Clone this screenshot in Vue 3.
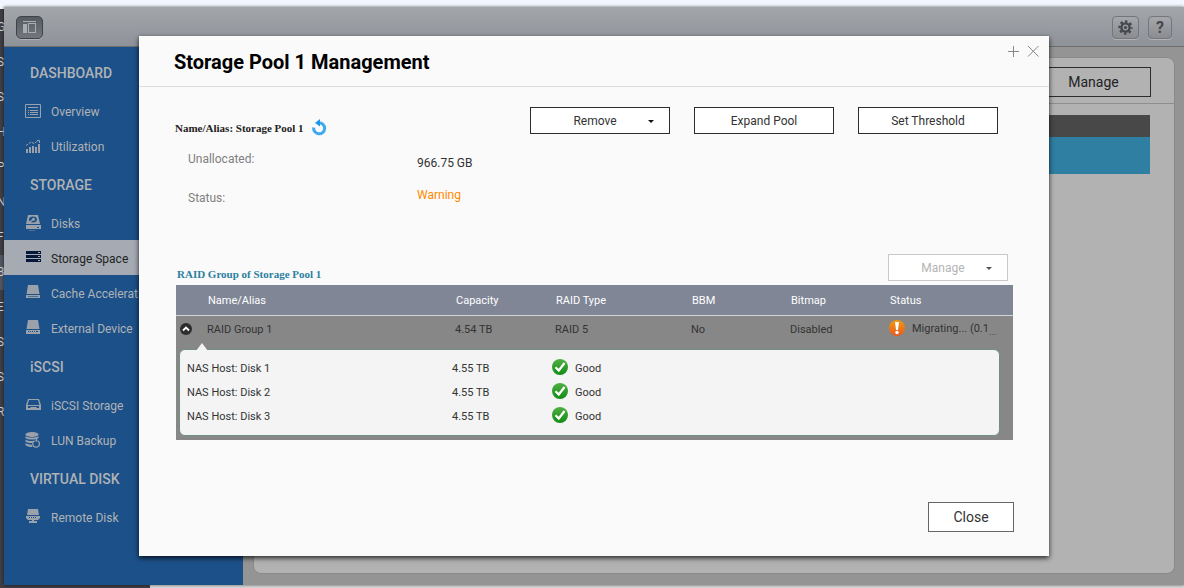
<script setup>
const desktopMenu = ['G', 'Si', 'Sc', 'H', 'Po', 'N', 'Fi', 'B', 'Ex', 'Sy', 'Sy', 'R']

const sections = [
  { title: 'DASHBOARD', items: [{ label: 'Overview', icon: 'overview' }, { label: 'Utilization', icon: 'chart' }] },
  {
    title: 'STORAGE',
    items: [
      { label: 'Disks', icon: 'disk' },
      { label: 'Storage Space', icon: 'rack', active: true },
      { label: 'Cache Acceleration', icon: 'cache' },
      { label: 'External Device', icon: 'external' },
    ],
  },
  { title: 'iSCSI', items: [{ label: 'iSCSI Storage', icon: 'iscsi' }, { label: 'LUN Backup', icon: 'backup' }] },
  { title: 'VIRTUAL DISK', items: [{ label: 'Remote Disk', icon: 'remote' }] },
]

const headings = ['Name/Alias', 'Capacity', 'RAID Type', 'BBM', 'Bitmap', 'Status']

const disks = [
  { name: 'NAS Host: Disk 1', capacity: '4.55 TB', status: 'Good' },
  { name: 'NAS Host: Disk 2', capacity: '4.55 TB', status: 'Good' },
  { name: 'NAS Host: Disk 3', capacity: '4.55 TB', status: 'Good' },
]
</script>

<template>
  <div class="desktop">
    <ul class="desktop-menu">
      <li v-for="(name, i) in desktopMenu" :key="i" :class="{ current: name === 'B' }">{{ name }}</li>
    </ul>

    <div class="window">
      <header class="toolbar">
        <button class="tool pressed" type="button" aria-label="Toggle sidebar">
          <svg width="14" height="14" viewBox="0 0 14 14">
            <path d="M0 1h13v1H0zM0 4h4v9H0zM5 4h1v9H5zM5 12h8v1H5zM12 4h1v8h-1zM5 3h8v1H5z" fill="#a9adb2" />
          </svg>
        </button>
        <div class="tool-group">
          <button class="tool" type="button" aria-label="Settings">
            <svg width="15" height="15" viewBox="0 0 15 15">
              <g fill="none" stroke="#45484c">
                <circle cx="7.5" cy="7.5" r="4.1" stroke-width="2.4" />
                <circle cx="7.5" cy="7.5" r="6" stroke-width="2.4" stroke-dasharray="2.4 2.312" stroke-dashoffset="1.2" />
              </g>
              <circle cx="7.5" cy="7.5" r="1.6" fill="#45484c" />
            </svg>
          </button>
          <button class="tool help" type="button" aria-label="Help">?</button>
        </div>
      </header>

      <div class="window-body">
        <nav class="sidebar">
          <section v-for="s in sections" :key="s.title">
            <h2>{{ s.title }}</h2>
            <a v-for="item in s.items" :key="item.label" href="#" :class="{ active: item.active }">
              <svg class="nav-icon" width="16" height="16" viewBox="0 0 16 16">
                <template v-if="item.icon === 'overview'">
                  <path d="M.5 1.5h15v13H.5z" fill="none" stroke="currentColor" />
                  <path d="M3 4.5h10M3 7.5h1M5 7.5h8M3 9.5h1M5 9.5h8M3 11.5h1M5 11.5h8" stroke="currentColor" />
                </template>
                <template v-else-if="item.icon === 'chart'">
                  <path d="M1 11h2v4H1zM4 9h2v6H4zM7 8h2v7H7zM10 9h2v6h-2zM13 6h2v9h-2z" fill="currentColor" />
                  <path d="M1 7.5L6 4l3 1.500L14 2" fill="none" stroke="currentColor" stroke-dasharray="2.500 1" />
                  <path d="M12 2.500h2.500V5" fill="none" stroke="currentColor" />
                </template>
                <template v-else-if="item.icon === 'disk'">
                  <path fill-rule="evenodd" d="M3 0h10l2 9H1zM8 1.500c-2.500 0-4 1.200-4 3s1.500 3 4 3 4-1.200 4-3-1.500-3-4-3z" fill="currentColor" />
                  <path d="M5 7l3-2.500" stroke="currentColor" stroke-width="1.500" /><circle cx="8.500" cy="4.200" r="1.500" fill="currentColor" />
                  <path fill-rule="evenodd" d="M1 10h15v4H1zm11 2h2v1h-2z" fill="currentColor" />
                  <path d="M4 15.500h6" stroke="currentColor" opacity=".4" />
                </template>
                <template v-else-if="item.icon === 'rack'">
                  <path fill-rule="evenodd" d="M1 1h15v3H1zM13 2h2v1h-2zM1 5h15v3H1zM13 6h2v1h-2zM1 9h15v3H1zM13 10h2v1h-2z" fill="currentColor" />
                </template>
                <template v-else-if="item.icon === 'cache'">
                  <path d="M3 0h10l1.500 9h-13zM1 10h14v3H1z" fill="currentColor" /><path d="M3 11.500h10" stroke="#1c5088" opacity=".6" />
                </template>
                <template v-else-if="item.icon === 'external'">
                  <path fill-rule="evenodd" d="M3 0h10l1.500 9h-13zM1 10h14v4H1zm2 1v1h1v-1zm2 0v1h1v-1zm2 0v1h1v-1zm2 0v1h1v-1zm2 0v1h2v-1z" fill="currentColor" />
                </template>
                <template v-else-if="item.icon === 'iscsi'">
                  <path fill-rule="evenodd" d="M3 2h11l2 6v5H1V8zm1 1L2.500 8h12L13 3zM3 9v2h2l1-1h5l1 1h2V9z" fill="currentColor" />
                </template>
                <template v-else-if="item.icon === 'backup'">
                  <g fill="currentColor">
                    <ellipse cx="7" cy="2.500" rx="6.500" ry="2.500" />
                    <path d="M.5 4c2 2 11 2 13 0v2c-2 2-11 2-13 0zM.5 7.500c2 1.500 5 1.800 8 1.500l-1.500 2c-3 0-5-.5-6.500-1.500zM.5 11c1.500 1 4 1.500 6 1.500l1 2.500c-3 0-6-.5-7-2z" />
                  </g>
                  <path d="M9.500 8.800a3.400 3.400 0 1 0 3.500.2" fill="none" stroke="currentColor" stroke-width="1.300" />
                  <path d="M12 6l.5 4L10 9z" fill="currentColor" />
                </template>
                <template v-else>
                  <path fill-rule="evenodd" d="M3 0h10l1 6H2zM1 7h14v2l-2 2H3L1 9zM4 8v1h1V8zm2 0v1h1V8zm2 0v1h1V8zm2 0v1h1V8z" fill="currentColor" />
                  <path d="M7 11h2v1h3v2H4v-2h3z" fill="currentColor" />
                </template>
              </svg>
              <span>{{ item.label }}</span>
            </a>
          </section>
        </nav>

        <main class="content">
          <div class="panel">
            <div class="panel-head"><button class="btn manage" type="button">Manage</button></div>
            <div class="pool-head"></div>
            <div class="pool-row"></div>
          </div>
        </main>
      </div>
    </div>

    <div class="dialog" role="dialog" aria-labelledby="dialog-title">
      <header class="dialog-head">
        <h1 id="dialog-title">Storage Pool 1 Management</h1>
        <div class="dialog-tools">
          <button type="button" aria-label="Maximize">
            <svg width="12" height="12" viewBox="0 0 12 12"><path d="M6.500 1v11M1 6.500h11" stroke="#888" fill="none" /></svg>
          </button>
          <button type="button" aria-label="Close dialog">
            <svg width="12" height="12" viewBox="0 0 12 12"><path d="M1 1l10.500 10.500M11.500 1L1 11.500" stroke="#888" fill="none" /></svg>
          </button>
        </div>
      </header>

      <div class="dialog-body">
        <div class="summary">
          <h3>Name/Alias: Storage Pool 1</h3>
          <button class="refresh" type="button" aria-label="Refresh">
            <svg width="16" height="17" viewBox="0 0 16 17">
              <path d="M1.700 8.500a5.500 5.500 0 1 0 5.800-4.700" fill="none" stroke="#3ea9ee" stroke-width="3" />
              <path d="M8 0v7.500L3 4z" fill="#1c96ea" />
            </svg>
          </button>
          <div class="actions">
            <button class="btn drop" type="button">Remove<i class="caret"></i></button>
            <button class="btn" type="button">Expand Pool</button>
            <button class="btn" type="button">Set Threshold</button>
          </div>
        </div>

        <dl class="facts">
          <dt>Unallocated:</dt>
          <dd>966.75 GB</dd>
          <dt class="low">Status:</dt>
          <dd class="warning">Warning</dd>
        </dl>

        <div class="group-bar">
          <h3>RAID Group of Storage Pool 1</h3>
          <button class="btn drop" type="button" disabled>Manage<i class="caret"></i></button>
        </div>

        <table class="raid">
          <colgroup>
            <col class="c-toggle" /><col class="c-name" /><col class="c-cap" /><col class="c-type" />
            <col class="c-small" /><col class="c-small" /><col />
          </colgroup>
          <thead>
            <tr>
              <th></th>
              <th v-for="h in headings" :key="h" scope="col">{{ h }}</th>
            </tr>
          </thead>
          <tbody>
            <tr class="group">
              <td class="toggle">
                <button type="button" aria-label="Collapse RAID Group 1">
                  <svg width="12" height="12" viewBox="0 0 12 12">
                    <circle cx="6" cy="6" r="6" fill="#2d2d2d" /><path d="M3 7.500l3-3 3 3" fill="none" stroke="#fff" stroke-width="1.800" />
                  </svg>
                </button>
              </td>
              <td>RAID Group 1</td>
              <td>4.54 TB</td>
              <td>RAID 5</td>
              <td>No</td>
              <td>Disabled</td>
              <td>
                <div class="state">
                  <svg width="16" height="16" viewBox="0 0 16 16">
                    <defs><linearGradient id="warn" x2="0" y2="1"><stop stop-color="#f29a0c" /><stop offset="1" stop-color="#e65a22" /></linearGradient></defs>
                    <circle cx="8" cy="8" r="8" fill="url(#warn)" />
                    <path d="M6 2h4l-1 8H7z" fill="#fff" /><circle cx="8" cy="12.500" r="1.700" fill="#fff" />
                  </svg>
                  <span>Migrating... (0.1<small>...</small></span>
                </div>
              </td>
            </tr>
            <tr>
              <td colspan="7" class="nested">
                <div class="disks">
                  <svg class="pointer" width="12" height="8" viewBox="0 0 12 8"><path d="M0 8l6-8 6 8z" fill="#f4f4f4" /></svg>
                  <table>
                    <colgroup><col class="d-name" /><col class="d-cap" /><col /></colgroup>
                    <tbody>
                      <tr v-for="d in disks" :key="d.name">
                        <td>{{ d.name }}</td>
                        <td>{{ d.capacity }}</td>
                        <td>
                          <div class="state">
                            <svg width="16" height="16" viewBox="0 0 16 16">
                              <defs><linearGradient id="ok" x2="0" y2="1"><stop stop-color="#52b043" /><stop offset="1" stop-color="#0f8c14" /></linearGradient></defs>
                              <circle cx="8" cy="8" r="8" fill="url(#ok)" />
                              <path d="M3.500 8.200l3.300 3.300 5.700-7.500" fill="none" stroke="#fff" stroke-width="2.200" />
                            </svg>
                            <span>{{ d.status }}</span>
                          </div>
                        </td>
                      </tr>
                    </tbody>
                  </table>
                </div>
              </td>
            </tr>
          </tbody>
        </table>

        <footer class="dialog-foot"><button class="btn close" type="button">Close</button></footer>
      </div>
    </div>
  </div>
</template>

<style>
body { overflow: hidden; }
</style>

<style scoped>
* { box-sizing: border-box; }
h1, h2, h3, ul, dl, dd { margin: 0; padding: 0; }
button { font-family: inherit; padding: 0; border: 0; background: none; }
svg { display: block; flex: none; }
.desktop {
  position: relative;
  min-height: 100vh;
  display: flex;
  background: linear-gradient(#f2f6fe 9px, #d8d8d8 9px);
  font-family: Roboto, "Liberation Sans", sans-serif;
  font-size: 12px;
  color: #333;
}
.desktop-menu {
  width: 150px;
  margin-top: 9px;
  padding-top: 1px;
  background: #3f3d45;
  color: #d0d0d0;
  list-style: none;
  line-height: 35px;
  overflow: hidden;
}
.desktop-menu li { text-indent: -3px; }
.desktop-menu .current { background: #505662; }

.window {
  position: absolute;
  inset: 7px 0 3px 4px;
  display: flex;
  flex-direction: column;
  background: #949494;
  box-shadow: 0 0 3px rgba(0, 0, 0, .6);
}
.toolbar {
  display: flex;
  align-items: center;
  justify-content: space-between;
  height: 40px;
  padding: 1px 12px 0;
  background: linear-gradient(#a3a6a9, #8e9299);
  border-bottom: 1px solid #6e6e6e;
}
.tool-group { display: flex; gap: 9px; }
.tool {
  display: flex;
  align-items: center;
  justify-content: center;
  width: 27px;
  height: 23px;
  border: 1px solid #73767f;
  border-radius: 4px;
  background: linear-gradient(#a5a7ab, #8a8c90);
  box-shadow: 0 1px 0 #b0b2b5;
}
.tool.help { width: 24px; font-size: 16px; font-weight: 700; color: #45484c; }
.tool.pressed { border-color: #3f4349; background: linear-gradient(#565b61, #73777c); border-radius: 5px; }
.window-body { flex: 1; display: flex; }
.sidebar { width: 239px; padding-top: 4px; background: #1c5088; color: #b0b3b6; }
.sidebar h2 { padding-left: 26px; line-height: 44px; height: 42px; font-size: 14px; font-weight: 500; }
.sidebar a {
  display: flex;
  align-items: center;
  gap: 10px;
  height: 35px;
  padding-left: 21px;
  color: inherit;
  text-decoration: none;
  font-size: 12px;
}
.sidebar a span { padding-top: 2px; }
.sidebar .nav-icon { color: #9aa1ab; }
.sidebar .active { background: #a6abb3; color: #222; }
.sidebar .active .nav-icon { color: #06183a; }
.content { flex: 1; display: flex; padding: 10px 9px 11px 10px; }
.panel { flex: 1; border: 1px solid #8a8a8a; border-radius: 8px; background: #b2b2b2; }
.panel-head { display: flex; justify-content: flex-end; padding: 9px 23px 6px; border-bottom: 1px solid #8e8e8e; }
.pool-head { height: 22px; margin: 11px 24px 0; background: #484848; }
.pool-row { height: 37px; margin: 0 24px; background: #2f7fa2; }

.btn {
  display: flex;
  align-items: center;
  justify-content: center;
  position: relative;
  width: 140px;
  height: 27px;
  border: 1px solid #2c2c2c;
  background: #fff;
  color: #333;
  font-size: 12px;
}
.btn.manage { width: 115px; height: 30px; background: transparent; font-size: 14px; color: #222; }
.btn.drop { padding-right: 10px; }
.btn:disabled { width: 120px; border-color: #c8c8c8; color: #b4b4b4; }
.caret {
  position: absolute;
  right: 15px;
  top: 12px;
  border: 3px solid transparent;
  border-top-color: #111;
  border-bottom: 0;
}
.btn:disabled .caret { border-top-color: #555; }

.dialog {
  position: absolute;
  top: 36px;
  left: 139px;
  right: 135px;
  background: #fafafa;
  box-shadow: 0 2px 5px rgba(0, 0, 0, .8);
}
.dialog-head {
  display: flex;
  justify-content: space-between;
  height: 51px;
  padding: 0 10px 0 35px;
  border-bottom: 1px solid #dedede;
}
.dialog-head h1 { line-height: 52px; font-size: 20px; font-weight: 700; color: #000; }
.dialog-tools { display: flex; gap: 8px; height: 12px; margin-top: 9px; }
.dialog-body { padding: 20px 36px 24px 37px; }
.summary { display: flex; height: 40px; padding: 0 15px 0 0; }
h3 { font-family: "Liberation Serif", serif; font-size: 11px; font-weight: 700; }
.summary h3 { margin-left: -1px; line-height: 42px; color: #222; }
.refresh { height: 17px; margin: 12px 0 0 8px; }
.actions { display: flex; gap: 24px; margin-left: auto; }
.facts {
  display: grid;
  grid-template: 32px 32px / 229px 1fr;
  padding-left: 12px;
}
.facts dt { line-height: 25px; align-self: start; color: #808080; }
.facts .low { align-self: end; }
.facts dd { align-self: center; }
.facts .warning { color: #ff8a00; }
.group-bar { display: flex; justify-content: space-between; margin: 43px 5px 4px 1px; }
.group-bar h3 { line-height: 41px; height: 27px; color: #2b80a0; }

table { width: 100%; border-collapse: collapse; table-layout: fixed; }
th, td { padding: 0; text-align: left; font-size: 11px; font-weight: 400; }
.raid { background: #878787; }
.raid thead { background: #808696; color: #fff; }
.raid th { height: 30px; padding: 2px 0 0 1px; border-bottom: 1px solid #d4d4d8; }
.c-toggle { width: 31px; }
.c-name { width: 248px; }
.c-cap { width: 100px; }
.c-type { width: 136px; }
.c-small { width: 99px; }
.group td { height: 28px; }
.toggle button { display: block; margin-left: 4px; }
.state { display: flex; align-items: center; gap: 7px; white-space: nowrap; }
.state svg { margin-bottom: 2px; }
small { font-size: 9px; vertical-align: sub; }
.nested { padding: 6px 13px 4px 3px; }
.disks {
  position: relative;
  padding: 6px 7px 7px;
  border: 1px solid #6f8f82;
  border-radius: 6px;
  background: #f4f4f4;
}
.pointer { position: absolute; left: 16px; top: -7px; }
.disks td { height: 24px; }
.d-name { width: 265px; }
.d-cap { width: 100px; }
.dialog-foot { display: flex; justify-content: flex-end; padding-top: 62px; margin-right: -1px; }
.btn.close { width: 86px; height: 30px; border-color: #666; font-size: 14px; }
</style>
